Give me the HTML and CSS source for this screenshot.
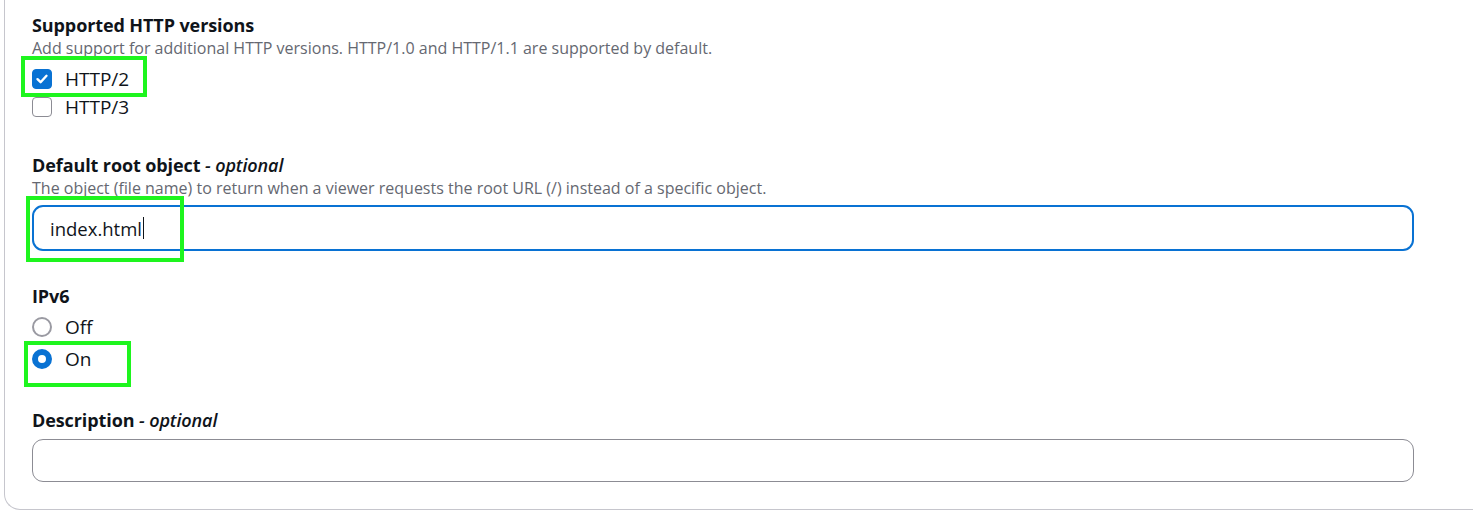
FILE: index.html
```html
<!DOCTYPE html>
<html lang="en">
<head>
<meta charset="utf-8">
<title>Distribution settings</title>
<link rel="stylesheet" href="styles.css">
</head>
<body>
<div class="card">
  <div class="field">
    <div class="label">Supported HTTP versions</div>
    <div class="desc">Add support for additional HTTP versions. HTTP/1.0 and HTTP/1.1 are supported by default.</div>
    <div class="options checks">
      <div class="option"><span class="checkbox checked"><svg viewBox="0 0 20 20" width="20" height="20"><path d="M5.5 10.2 L8.6 13.2 L14.5 6.8" fill="none" stroke="#fff" stroke-width="2.4" stroke-linecap="round" stroke-linejoin="round"/></svg></span><span class="opt-text">HTTP/2</span></div>
      <div class="option"><span class="checkbox"></span><span class="opt-text">HTTP/3</span></div>
    </div>
  </div>

  <div class="field f2">
    <div class="label">Default root object <i>- optional</i></div>
    <div class="desc">The object (file name) to return when a viewer requests the root URL (/) instead of a specific object.</div>
    <div class="input focused"><span class="value">index.html</span><span class="caret"></span></div>
  </div>

  <div class="field f3">
    <div class="label">IPv6</div>
    <div class="options radios">
      <div class="option"><span class="radio"></span><span class="opt-text">Off</span></div>
      <div class="option"><span class="radio on"></span><span class="opt-text">On</span></div>
    </div>
  </div>

  <div class="field f4">
    <div class="label">Description <i>- optional</i></div>
    <div class="input plain"></div>
  </div>

  <div class="mark m1"></div>
  <div class="mark m2"></div>
  <div class="mark m3"></div>
</div>
</body>
</html>
```
FILE: styles.css
```css
html, body {
  margin: 0;
  padding: 0;
  background: #ffffff;
}
body {
  font-family: "Open Sans", "Noto Sans", "Liberation Sans", sans-serif;
  color: #0f141a;
  overflow: hidden;
}
.card {
  position: relative;
  margin-left: 4px;
  box-sizing: border-box;
  height: 510px;
  border-left: 1px solid #c6c6cd;
  border-bottom: 1px solid #c6c6cd;
  border-bottom-left-radius: 16px;
  padding: 14px 59px 0 27px;
}
.label {
  font-size: 18px;
  font-weight: 700;
  line-height: 22px;
  letter-spacing: -0.1px;
}
.label i {
  font-style: italic;
  font-weight: 600;
}
.desc {
  margin-top: 2px;
  font-size: 16px;
  line-height: 20px;
  color: #656871;
}
.options {
  display: flex;
  flex-direction: column;
}
.checks {
  margin-top: 7px;
}
.radios {
  margin-top: 6px;
  gap: 4px;
}
.option {
  display: flex;
  align-items: center;
  height: 28px;
}
.opt-text {
  margin-left: 13px;
  font-size: 19px;
}
.checkbox {
  width: 20px;
  height: 20px;
  box-sizing: border-box;
  border: 1.5px solid #8c8c94;
  border-radius: 4px;
  display: inline-flex;
  align-items: center;
  justify-content: center;
}
.checkbox.checked {
  background: #0972d3;
  border-color: #0972d3;
}
.checkbox svg {
  display: block;
  flex: none;
}
.radio {
  width: 20px;
  height: 20px;
  box-sizing: border-box;
  border: 2px solid #9a9aa2;
  border-radius: 50%;
  background: #fff;
}
.radio.on {
  border: 6px solid #0972d3;
}
.f2 {
  margin-top: 33px;
}
.f3 {
  margin-top: 34px;
}
.f4 {
  margin-top: 36px;
}
.input {
  box-sizing: border-box;
  border-radius: 11px;
  background: #fff;
  display: flex;
  align-items: center;
}
.input.focused {
  margin-top: 7px;
  height: 46px;
  border: 2px solid #0972d3;
  padding-left: 16px;
  font-size: 18.5px;
}
.caret {
  display: inline-block;
  width: 1px;
  height: 22px;
  background: #0f141a;
  margin-left: 1px;
}
.input.plain {
  margin-top: 8px;
  height: 43px;
  border: 1px solid #8c8c94;
}
.mark {
  position: absolute;
  border: 4px solid #1ef51e;
  box-sizing: border-box;
  pointer-events: none;
}
.m1 {
  left: 16px;
  top: 56px;
  width: 126px;
  height: 41px;
}
.m2 {
  left: 21px;
  top: 196px;
  width: 158px;
  height: 66px;
}
.m3 {
  left: 19px;
  top: 341px;
  width: 107px;
  height: 46px;
}
```
